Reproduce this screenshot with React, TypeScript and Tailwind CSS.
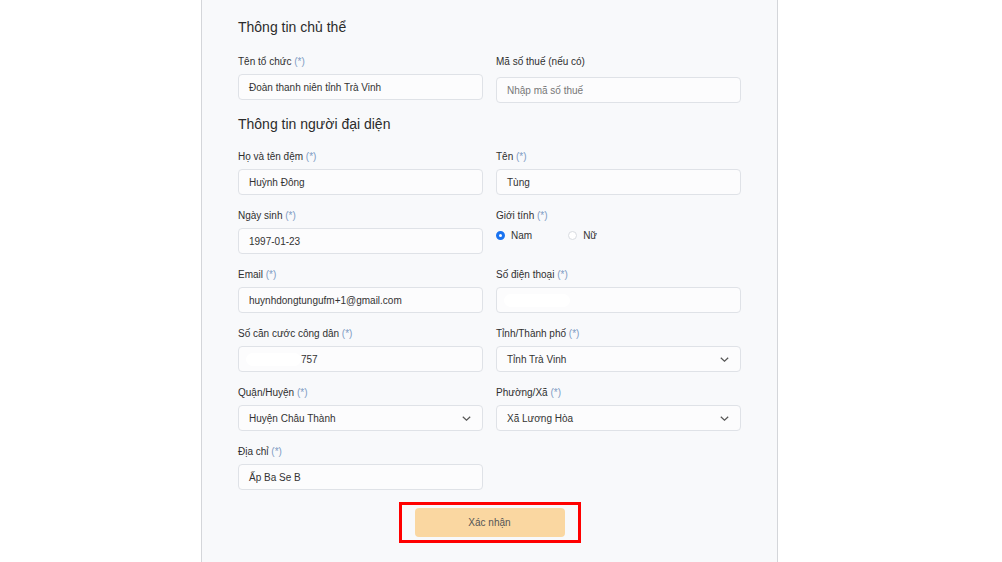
import React from "react";

const font = { fontFamily: '"Liberation Sans", Arial, sans-serif' };

function Label({ text, req = true }: { text: string; req?: boolean }) {
  return (
    <div className="h-[14px] leading-[14px] text-[10px] text-[#2f2f2f] mt-[1px] mb-[5px] whitespace-nowrap">
      {text}
      {req && <span className="text-[#7f9cc4]"> (*)</span>}
    </div>
  );
}

function Input({ value, placeholder, children }: { value?: string; placeholder?: string; children?: React.ReactNode }) {
  return (
    <div className="h-[26px] rounded-[4px] border border-[#dfe2e7] bg-[#fcfcfd] flex items-center px-[10px] text-[10px] text-[#333]">
      {children ?? (value ? <span>{value}</span> : <span className="text-[#777]">{placeholder}</span>)}
    </div>
  );
}

function Chevron() {
  return (
    <svg width="9" height="5" viewBox="0 0 9 5" fill="none">
      <path d="M0.8 0.8 L4.5 4.2 L8.2 0.8" stroke="#555" strokeWidth="1.2" />
    </svg>
  );
}

function Select({ value }: { value: string }) {
  return (
    <div className="h-[26px] rounded-[4px] border border-[#dfe2e7] bg-[#fcfcfd] flex items-center justify-between pl-[10px] pr-[11px] text-[10px] text-[#333]">
      <span>{value}</span>
      <Chevron />
    </div>
  );
}

function Field({ label, req = true, children }: { label: string; req?: boolean; children: React.ReactNode }) {
  return (
    <div className="flex flex-col">
      <Label text={label} req={req} />
      {children}
    </div>
  );
}

export default function App() {
  return (
    <div className="w-[1002px] h-[562px] bg-white overflow-hidden" style={font}>
      <div className="ml-[201px] w-[577px] h-[562px] border-x border-[#d4d6da] bg-[#f8f9fb] px-[36px] pt-[17px]">
        <div className="h-[20px] leading-[20px] text-[14px] text-[#2b2b2b]">Thông tin chủ thể</div>
        <div className="grid grid-cols-2 gap-x-[13px] mt-[17px]">
          <Field label="Tên tổ chức">
            <Input value="Đoàn thanh niên tỉnh Trà Vinh" />
          </Field>
          <div className="flex flex-col">
            <Label text="Mã số thuế (nếu có)" req={false} />
            <div className="mt-[3px]">
              <Input placeholder="Nhập mã số thuế" />
            </div>
          </div>
        </div>
        <div className="mt-[11px] h-[20px] leading-[20px] text-[14px] text-[#2b2b2b]">Thông tin người đại diện</div>
        <div className="grid grid-cols-2 gap-x-[13px] gap-y-[13px] mt-[15px]">
          <Field label="Họ và tên đệm">
            <Input value="Huỳnh Đông" />
          </Field>
          <Field label="Tên">
            <Input value="Tùng" />
          </Field>
          <Field label="Ngày sinh">
            <Input value="1997-01-23" />
          </Field>
          <Field label="Giới tính">
            <div className="flex items-center h-[14px] text-[10px] text-[#333]">
              <div className="flex items-center gap-[6px] mr-[36px]">
                <span className="w-[9px] h-[9px] rounded-full border-[3px] border-[#1a73f0] bg-white" />
                <span>Nam</span>
              </div>
              <div className="flex items-center gap-[6px]">
                <span className="w-[9px] h-[9px] rounded-full border border-[#d9dce1] bg-white" />
                <span>Nữ</span>
              </div>
            </div>
          </Field>
          <Field label="Email">
            <Input value="huynhdongtungufm+1@gmail.com" />
          </Field>
          <Field label="Số điện thoại">
            <Input>
              <span className="ml-[-3px] w-[66px] h-[13px] rounded-full bg-white" />
            </Input>
          </Field>
          <Field label="Số căn cước công dân">
            <Input>
              <span className="ml-[-3px] w-[55px] h-[13px] rounded-full bg-white" />
              <span>757</span>
            </Input>
          </Field>
          <Field label="Tỉnh/Thành phố">
            <Select value="Tỉnh Trà Vinh" />
          </Field>
          <Field label="Quận/Huyện">
            <Select value="Huyện Châu Thành" />
          </Field>
          <Field label="Phường/Xã">
            <Select value="Xã Lương Hòa" />
          </Field>
          <Field label="Địa chỉ">
            <Input value="Ấp Ba Se B" />
          </Field>
          <div />
        </div>
        <div className="flex justify-center mt-[12px]">
          <div className="border-[3px] border-[#ff0000] px-[13px] py-[3px]">
            <button className="w-[150px] h-[29px] rounded-[4px] bg-[#fad7a1] text-[10px] text-[#555]">Xác nhận</button>
          </div>
        </div>
      </div>
    </div>
  );
}
